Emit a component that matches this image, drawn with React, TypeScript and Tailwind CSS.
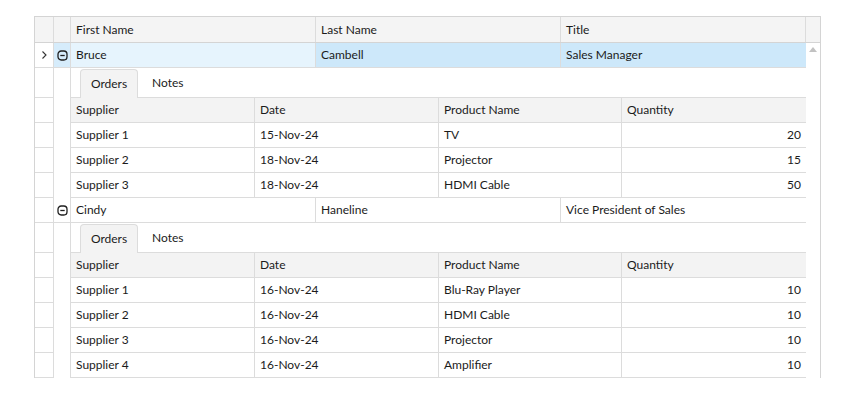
type Order = { supplier: string; date: string; product: string; qty: number }

const customers: { first: string; last: string; title: string; selected: boolean; orders: Order[] }[] = [
  {
    first: "Bruce",
    last: "Cambell",
    title: "Sales Manager",
    selected: true,
    orders: [
      { supplier: "Supplier 1", date: "15-Nov-24", product: "TV", qty: 20 },
      { supplier: "Supplier 2", date: "18-Nov-24", product: "Projector", qty: 15 },
      { supplier: "Supplier 3", date: "18-Nov-24", product: "HDMI Cable", qty: 50 },
    ],
  },
  {
    first: "Cindy",
    last: "Haneline",
    title: "Vice President of Sales",
    selected: false,
    orders: [
      { supplier: "Supplier 1", date: "16-Nov-24", product: "Blu-Ray Player", qty: 10 },
      { supplier: "Supplier 2", date: "16-Nov-24", product: "HDMI Cable", qty: 10 },
      { supplier: "Supplier 3", date: "16-Nov-24", product: "Projector", qty: 10 },
      { supplier: "Supplier 4", date: "16-Nov-24", product: "Amplifier", qty: 10 },
    ],
  },
]

function MinusBox() {
  return (
    <svg width="11" height="11" viewBox="0 0 11 11">
      <rect x="1" y="1" width="9" height="9" rx="3.2" fill="none" stroke="#1f1f1f" strokeWidth="1.3" />
      <path d="M3.3 5.5h4.4" stroke="#1f1f1f" strokeWidth="1.3" />
    </svg>
  )
}

function Chevron() {
  return (
    <svg width="8" height="10" viewBox="0 0 8 10">
      <path d="M2.5 1.5 6 5 2.5 8.5" fill="none" stroke="#333" strokeWidth="1.1" />
    </svg>
  )
}

// left gutter used by every detail line: indicator cell with a row line, expand cell without
function DetailGutter() {
  return (
    <>
      <div className="w-[19px] shrink-0 border-r border-b border-[#dcdcdc]" />
      <div className="w-[17px] shrink-0 border-r border-[#dcdcdc]" />
    </>
  )
}

function Details({ orders }: { orders: Order[] }) {
  return (
    <>
      <div className="flex h-[30px]">
        <DetailGutter />
        <div className="flex w-[735px] items-end border-b border-[#dcdcdc] pl-[9px]">
          <div className="-mb-px flex h-[29px] w-[58px] items-center justify-center rounded-t-[4px] border border-b-0 border-[#dcdcdc] bg-[#f3f3f3]">
            Orders
          </div>
          <div className="flex h-[29px] items-center pl-[14px]">Notes</div>
        </div>
      </div>
      <div className="flex h-[25px]">
        <DetailGutter />
        <div className="flex w-[735px] border-b border-[#dcdcdc] bg-[#f3f3f3]">
          <div className="flex w-[184px] items-center border-r border-[#dcdcdc] px-[5px]">Supplier</div>
          <div className="flex w-[184px] items-center border-r border-[#dcdcdc] px-[5px]">Date</div>
          <div className="flex w-[183px] items-center border-r border-[#dcdcdc] px-[5px]">Product Name</div>
          <div className="flex w-[184px] items-center px-[5px]">Quantity</div>
        </div>
      </div>
      {orders.map((o) => (
        <div key={o.supplier} className="flex h-[25px]">
          <DetailGutter />
          <div className="flex w-[735px] border-b border-[#dcdcdc]">
            <div className="flex w-[184px] items-center border-r border-[#dcdcdc] px-[5px]">{o.supplier}</div>
            <div className="flex w-[184px] items-center border-r border-[#dcdcdc] px-[5px]">{o.date}</div>
            <div className="flex w-[183px] items-center border-r border-[#dcdcdc] px-[5px]">{o.product}</div>
            <div className="flex w-[184px] items-center justify-end px-[5px]">{o.qty}</div>
          </div>
        </div>
      ))}
    </>
  )
}

export default function App() {
  return (
    <div className="min-h-screen bg-white pl-[34px] pt-[16px] text-[12px] text-[#1b1b1b] [font-family:Lato,'Liberation_Sans',sans-serif]">
      <div className="w-[787px] border-x border-t border-[#d4d4d4]">
        <div className="flex h-[26px] border-b border-[#d4d4d4] bg-[#f4f4f4]">
          <div className="w-[19px] border-r border-[#dcdcdc]" />
          <div className="w-[17px] border-r border-[#dcdcdc]" />
          <div className="flex w-[245px] items-center border-r border-[#dcdcdc] px-[5px]">First Name</div>
          <div className="flex w-[245px] items-center border-r border-[#dcdcdc] px-[5px]">Last Name</div>
          <div className="flex w-[245px] items-center border-r border-[#dcdcdc] px-[5px]">Title</div>
          <div className="w-[14px]" />
        </div>

        <div className="flex">
          <div className="w-[771px]">
            {customers.map((c) => (
              <div key={c.first}>
                <div className="flex h-[25px]">
                  <div className="flex w-[19px] items-center justify-center border-r border-b border-[#dcdcdc]">
                    {c.selected && <Chevron />}
                  </div>
                  <div
                    className={`flex w-[17px] items-center justify-center border-r border-b border-[#dcdcdc] ${
                      c.selected ? "bg-[#d6ecfb]" : ""
                    }`}
                  >
                    <MinusBox />
                  </div>
                  <div
                    className={`flex w-[245px] items-center border-r border-b border-[#dcdcdc] px-[5px] ${
                      c.selected ? "bg-[#e6f4fd]" : ""
                    }`}
                  >
                    {c.first}
                  </div>
                  <div
                    className={`flex w-[245px] items-center border-r border-b border-[#dcdcdc] px-[5px] ${
                      c.selected ? "bg-[#cde8fa]" : ""
                    }`}
                  >
                    {c.last}
                  </div>
                  <div
                    className={`flex w-[245px] items-center border-b border-[#dcdcdc] px-[5px] ${
                      c.selected ? "bg-[#cde8fa]" : ""
                    }`}
                  >
                    {c.title}
                  </div>
                </div>
                <Details orders={c.orders} />
              </div>
            ))}
          </div>
          <div className="flex w-[14px] justify-center pt-[4px]">
            <svg width="8" height="5" viewBox="0 0 8 5">
              <path d="M4 0 8 5H0Z" fill="#c2c2c2" />
            </svg>
          </div>
        </div>
      </div>
    </div>
  )
}
